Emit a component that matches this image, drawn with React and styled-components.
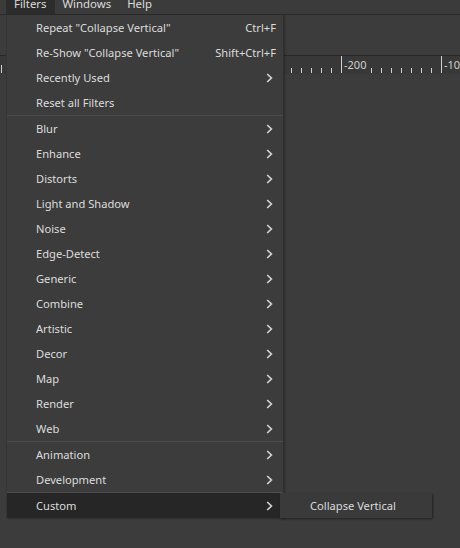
import React from "react";
import styled, { createGlobalStyle } from "styled-components";

const Global = createGlobalStyle`
  html, body {
    margin: 0;
    padding: 0;
    background: #3c3c3c;
    overflow: hidden;
  }
  body {
    font-family: "Noto Sans", "Open Sans", sans-serif;
    font-size: 11.15px;
    color: #dcdcdc;
  }
`;

const Window = styled.div`
  position: relative;
  width: 460px;
  height: 548px;
  display: flex;
  flex-direction: column;
  background: #3c3c3c;
`;

const MenuBar = styled.div`
  height: 14px;
  display: flex;
  align-items: flex-end;
  overflow: hidden;
  padding-left: 6px;
  background: #3b3b3b;
  border-bottom: 1px solid #2a2a2a;
`;

const BarItem = styled.div`
  padding: 0 8px 2px;
  line-height: 16px;
  font-size: 11.4px;
  background: ${(p) => (p.$open ? "#2c2c2c" : "transparent")};
  color: #dcdcdc;
`;

const ToolArea = styled.div`
  height: 40px;
`;

const RulerBar = styled.div`
  height: 18px;
  border-top: 1px solid #262626;
  background: #383838;
  display: flex;
`;

const Canvas = styled.div`
  flex: 1;
  background: #3c3c3c;
`;

const Menu = styled.div`
  position: absolute;
  left: 6px;
  top: 15px;
  width: 276px;
  display: flex;
  flex-direction: column;
  background: #3c3c3c;
  border-left: 1px solid #353535;
  box-shadow: 1px 0 0 #2e2e2e, 2px 1px 2px rgba(0, 0, 0, 0.25);
`;

const Row = styled.div`
  height: 25px;
  display: flex;
  align-items: center;
  padding: 0 7px 0 29px;
  background: ${(p) => (p.$active ? "#262626" : "transparent")};
  color: #dcdcdc;
  white-space: nowrap;
`;

const Label = styled.span`
  flex: 1;
`;

const Shortcut = styled.span`
  color: #dcdcdc;
`;

const ArrowBox = styled.span`
  display: flex;
  align-items: center;
  margin-right: 3px;
`;

const Separator = styled.div`
  height: 1px;
  background: #4c4c4c;
`;

const SubMenu = styled.div`
  position: absolute;
  left: 280px;
  top: 493px;
  width: 152px;
  box-sizing: border-box;
  height: 25px;
  display: flex;
  align-items: center;
  padding: 0 0 0 30px;
  background: #3a3a3a;
  box-shadow: 1px 1px 2px rgba(0, 0, 0, 0.45);
  white-space: nowrap;
`;

const Chevron = () => (
  <svg width="7" height="10" viewBox="0 0 7 10">
    <polyline
      points="1.2,1 5.4,5 1.2,9"
      fill="none"
      stroke="#d2d2d2"
      strokeWidth="1.7"
    />
  </svg>
);

// Horizontal ruler: a tick every 10px, a full-height tick with a label every 100px
const Ruler = () => {
  const ticks = [];
  for (let x = 1; x < 460; x += 10) {
    const major = (x - 41) % 100 === 0;
    if (!major && x > 343 && x < 368) continue;
    if (!major && x > 443) continue;
    const h = major ? 17 : x === 1 ? 8 : 5;
    ticks.push(
      <line
        key={x}
        x1={x + 0.5}
        x2={x + 0.5}
        y1={17 - h}
        y2={17}
        stroke="#d0d0d0"
        strokeWidth="1"
      />
    );
  }
  return (
    <svg width="460" height="17" viewBox="0 0 460 17">
      {ticks}
      <text x="344" y="13" fill="#d0d0d0" fontSize="11" fontFamily="Noto Sans, sans-serif">
        -200
      </text>
      <text x="444" y="13" fill="#d0d0d0" fontSize="11" fontFamily="Noto Sans, sans-serif">
        -100
      </text>
    </svg>
  );
};

const groups = [
  [
    { label: 'Repeat "Collapse Vertical"', shortcut: "Ctrl+F" },
    { label: 'Re-Show "Collapse Vertical"', shortcut: "Shift+Ctrl+F" },
    { label: "Recently Used", sub: true },
    { label: "Reset all Filters" },
  ],
  [
    "Blur",
    "Enhance",
    "Distorts",
    "Light and Shadow",
    "Noise",
    "Edge-Detect",
    "Generic",
    "Combine",
    "Artistic",
    "Decor",
    "Map",
    "Render",
    "Web",
  ].map((label) => ({ label, sub: true })),
  [
    { label: "Animation", sub: true },
    { label: "Development", sub: true },
  ],
  [{ label: "Custom", sub: true, active: true }],
];

export default function App() {
  return (
    <Window>
      <Global />
      <MenuBar>
        <BarItem $open>Filters</BarItem>
        <BarItem>Windows</BarItem>
        <BarItem>Help</BarItem>
      </MenuBar>
      <ToolArea />
      <RulerBar>
        <Ruler />
      </RulerBar>
      <Canvas />
      <Menu>
        {groups.map((items, gi) => (
          <React.Fragment key={gi}>
            {gi > 0 && <Separator />}
            {items.map((it) => (
              <Row key={it.label} $active={it.active}>
                <Label>{it.label}</Label>
                {it.shortcut && <Shortcut>{it.shortcut}</Shortcut>}
                {it.sub && (
                  <ArrowBox>
                    <Chevron />
                  </ArrowBox>
                )}
              </Row>
            ))}
          </React.Fragment>
        ))}
      </Menu>
      <SubMenu>Collapse Vertical</SubMenu>
    </Window>
  );
}
